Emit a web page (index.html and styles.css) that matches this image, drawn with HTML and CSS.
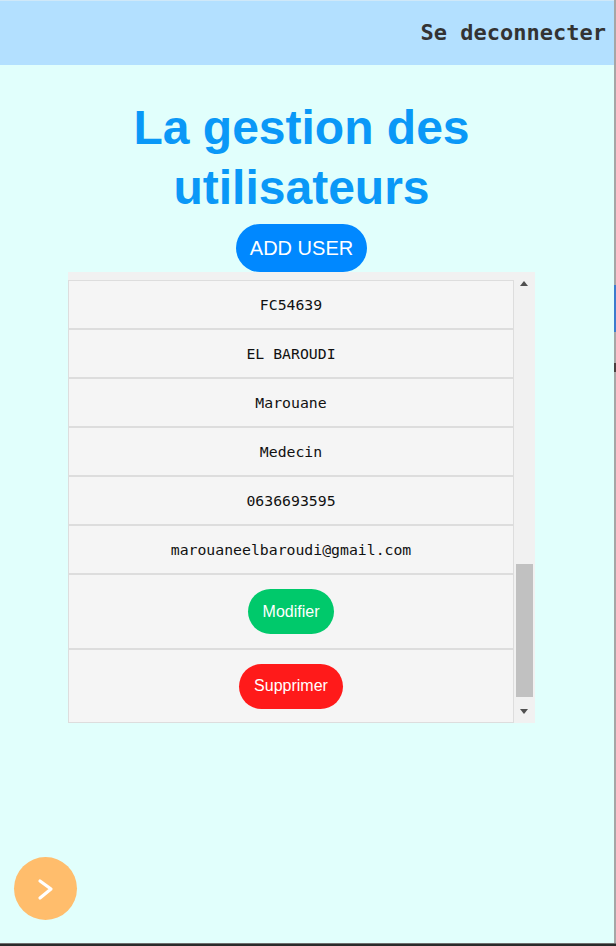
FILE: index.html
```html
<!DOCTYPE html>
<html lang="fr">
<head>
<meta charset="utf-8">
<title>La gestion des utilisateurs</title>
<link rel="stylesheet" href="styles.css">
</head>
<body>
<div class="screen">
  <div class="page">
    <header class="topbar">
      <span class="logout">Se deconnecter</span>
    </header>
    <main class="main">
      <h1 class="title">La gestion des utilisateurs</h1>
      <button class="btn btn-add">ADD USER</button>
      <div class="table-box">
        <div class="rows">
          <div class="cell">FC54639</div>
          <div class="cell">EL BAROUDI</div>
          <div class="cell">Marouane</div>
          <div class="cell">Medecin</div>
          <div class="cell">0636693595</div>
          <div class="cell">marouaneelbaroudi@gmail.com</div>
          <div class="cell cell-btn"><button class="btn btn-edit">Modifier</button></div>
          <div class="cell cell-btn cell-last"><button class="btn btn-del">Supprimer</button></div>
        </div>
        <div class="scrollbar">
          <div class="sb-arrow"><span class="tri-up"></span></div>
          <div class="sb-space"></div>
          <div class="sb-thumb"></div>
          <div class="sb-rest"><span class="tri-down"></span></div>
        </div>
      </div>
    </main>
  </div>
  <div class="edge">
    <div class="edge-a"></div>
    <div class="edge-blue"></div>
    <div class="edge-b"></div>
    <div class="edge-dark"></div>
  </div>
</div>
<div class="bottom-bar"></div>
<button class="fab" aria-label="next">
  <svg width="63" height="63" viewBox="0 0 63 63"><polyline points="26,24 37,32 26,41" fill="none" stroke="#ffffff" stroke-width="3.2" stroke-linecap="round" stroke-linejoin="round"/></svg>
</button>
</body>
</html>
```

FILE: styles.css
```css
html, body {
  margin: 0;
  padding: 0;
}
body {
  width: 616px;
  height: 946px;
  overflow: hidden;
  background: #e1fffc;
  font-family: "Liberation Sans", Arial, sans-serif;
}
.screen {
  display: flex;
  height: 943px;
}
.page {
  width: 614px;
  display: flex;
  flex-direction: column;
}
.topbar {
  height: 64px;
  border-top: 1px solid #cfe8f8;
  background: #b3e0ff;
  display: flex;
  align-items: center;
  justify-content: flex-end;
  padding-right: 8px;
}
.logout {
  font-family: "DejaVu Sans Mono", monospace;
  font-weight: bold;
  font-size: 22px;
  color: #333333;
  margin-top: -1px;
}
.main {
  width: 603px;
  display: flex;
  flex-direction: column;
  align-items: center;
}
.title {
  margin: 33px 0 6px;
  font-size: 48px;
  line-height: 60px;
  font-weight: bold;
  color: #0a98f7;
  text-align: center;
  width: 420px;
}
.btn {
  border: none;
  border-radius: 999px;
  color: #ffffff;
  font-family: "Liberation Sans", Arial, sans-serif;
  cursor: pointer;
}
.btn-add {
  height: 48px;
  padding: 0 14px;
  font-size: 20px;
  background: #0088ff;
}
.table-box {
  display: flex;
  width: 467px;
  height: 451px;
  background: #f1f1f1;
  overflow: hidden;
}
.rows {
  width: 446px;
  padding-top: 8px;
  display: flex;
  flex-direction: column;
}
.cell {
  height: 47px;
  flex: none;
  border: 1px solid #dddddd;
  background: #f5f5f5;
  display: flex;
  align-items: center;
  justify-content: center;
  font-family: "DejaVu Sans Mono", monospace;
  font-size: 14.8px;
  color: #111111;
}
.cell-btn {
  height: 73px;
}
.cell-last {
  height: 72px;
}
.btn-edit,
.btn-del {
  height: 45px;
  padding: 0 15px;
  font-size: 16px;
}
.btn-edit {
  background: #00c96b;
}
.btn-del {
  background: #ff1a1a;
}
.scrollbar {
  width: 21px;
  display: flex;
  flex-direction: column;
  background: #f1f1f1;
}
.sb-arrow {
  height: 17px;
  display: flex;
  justify-content: center;
  align-items: flex-end;
}
.tri-up {
  width: 0;
  height: 0;
  border-left: 4px solid transparent;
  border-right: 4px solid transparent;
  border-bottom: 5px solid #505050;
  margin-bottom: 3px;
  margin-left: -2px;
}
.sb-space {
  height: 275px;
}
.sb-thumb {
  height: 133px;
  width: 17px;
  margin-left: 2px;
  background: #c1c1c1;
}
.sb-rest {
  flex: 1;
  display: flex;
  justify-content: center;
  align-items: flex-end;
}
.tri-down {
  width: 0;
  height: 0;
  border-left: 4px solid transparent;
  border-right: 4px solid transparent;
  border-top: 5px solid #505050;
  margin-bottom: 9px;
  margin-left: -2px;
}
.edge {
  width: 2px;
  display: flex;
  flex-direction: column;
  background: #a6a6a6;
}
.edge-a {
  height: 285px;
}
.edge-blue {
  height: 47px;
  background: #3c7ccc;
}
.edge-b {
  height: 31px;
}
.edge-dark {
  height: 9px;
  background: #4a4040;
}
.bottom-bar {
  height: 3px;
  background: #2a2a2a;
  border-top: 1px solid #707070;
}
.fab {
  position: absolute;
  left: 14px;
  top: 857px;
  width: 63px;
  height: 63px;
  padding: 0;
  border: none;
  border-radius: 50%;
  background: #ffbd6c;
  display: flex;
  align-items: center;
  justify-content: center;
}
.fab svg {
  display: block;
}
```
